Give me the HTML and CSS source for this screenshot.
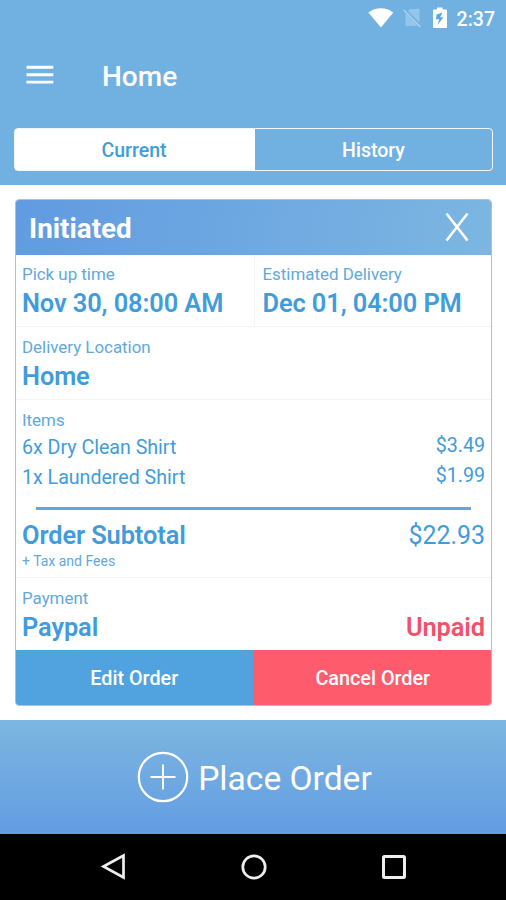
FILE: index.html
```html
<!DOCTYPE html>
<html lang="en">
<head>
<meta charset="utf-8">
<title>Home</title>
<link rel="stylesheet" href="styles.css">
</head>
<body>
<div class="screen">
  <header class="header">
    <div class="status">
      <svg class="wifi" width="26" height="20" viewBox="0 0 26 20"><path d="M.4 4.6C7.5-1.2 18.500-1.200 25.300 4.600L12.900 19.500z" fill="#fff"/></svg>
      <svg class="sim" width="20" height="20" viewBox="0 0 20 20"><path d="M7 1H16.500V14.800L5 3zM2.500 5L15 18H2.500z" fill="#94c6e9"/><path d="M.8 2L17.500 19" stroke="#a8d2ef" stroke-width="1.500"/></svg>
      <svg class="battery" width="16" height="22" viewBox="0 0 16 22"><path d="M5 .5H10.500V2.500H14Q15 2.500 15 3.500V20Q15 21 14 21H2Q1 21 1 20V3.500Q1 2.500 2 2.500H5z" fill="#fff"/><path d="M10.500 5.500L4.500 7.500L4 12.300H7.300L5.500 18L11.500 10.300H8.200z" fill="#57a9df"/></svg>
      <span class="clock">2:37</span>
    </div>
    <div class="appbar">
      <svg class="menu" width="28" height="20" viewBox="0 0 28 20"><path d="M.5 2.300H27.300M.5 9.700H27.300M.5 17.100H27.300" stroke="#fff" stroke-width="2.900"/></svg>
      <h1 class="title">Home</h1>
    </div>
    <nav class="tabs">
      <div class="tab tab-active">Current</div>
      <div class="tab">History</div>
    </nav>
  </header>

  <main class="content">
    <article class="card">
      <div class="card-head">
        <h2 class="state">Initiated</h2>
        <svg class="close" width="24" height="30" viewBox="0 0 24 30"><path d="M1.500 1.500L22.500 28.500M22.500 1.500L1.500 28.500" stroke="#fff" stroke-width="2.600" fill="none"/></svg>
      </div>
      <div class="times">
        <section class="cell">
          <div class="label">Pick up time</div>
          <div class="value">Nov 30, 08:00 AM</div>
        </section>
        <section class="cell cell-right">
          <div class="label">Estimated Delivery</div>
          <div class="value">Dec 01, 04:00 PM</div>
        </section>
      </div>
      <section class="cell location">
        <div class="label">Delivery Location</div>
        <div class="value">Home</div>
      </section>
      <section class="cell items">
        <div class="label">Items</div>
        <div class="item"><span>6x Dry Clean Shirt</span><span class="price">$3.49</span></div>
        <div class="item"><span>1x Laundered Shirt</span><span class="price">$1.99</span></div>
        <div class="rule"></div>
        <div class="subtotal"><span class="value">Order Subtotal</span><span class="amount">$22.93</span></div>
        <div class="note">+ Tax and Fees</div>
      </section>
      <section class="cell payment">
        <div class="label">Payment</div>
        <div class="pay-row"><span class="value">Paypal</span><span class="value unpaid">Unpaid</span></div>
      </section>
      <div class="actions">
        <div class="action edit">Edit Order</div>
        <div class="action cancel">Cancel Order</div>
      </div>
    </article>
  </main>

  <div class="place">
    <svg width="52" height="52" viewBox="0 0 52 52" fill="none" stroke="#fff"><circle cx="26" cy="26" r="24.200" stroke-width="2.200"/><path d="M13.500 26H38.500M26 13.500V38.500" stroke-width="1.900"/></svg>
    <span class="place-text">Place Order</span>
  </div>

  <footer class="navbar">
    <svg width="28" height="30" viewBox="0 0 28 30"><path d="M3.500 14.500L23.500 3.500V25.500z" fill="none" stroke="#eee" stroke-width="2.700"/></svg>
    <svg width="28" height="30" viewBox="0 0 28 30"><circle cx="14" cy="15" r="11.200" fill="none" stroke="#eee" stroke-width="2.700"/></svg>
    <svg width="28" height="30" viewBox="0 0 28 30"><rect x="3.500" y="4.500" width="21" height="21" rx="1" fill="none" stroke="#eee" stroke-width="3"/></svg>
  </footer>
</div>
</body>
</html>
```

FILE: styles.css
```css
* { box-sizing: border-box; }
body { margin: 0; font-family: Roboto, "Liberation Sans", sans-serif; background: #fff; }
svg { display: block; flex: none; }
.screen { width: 506px; height: 900px; display: flex; flex-direction: column; overflow: hidden; }

.header { height: 185px; background: #70b1e2; color: #fff; padding: 0 13px 0 14px; }
.status { height: 38px; display: flex; align-items: flex-start; justify-content: flex-end; padding-top: 8px; margin-right: -2px; }
.sim { margin: 0 0 0 9px; }
.battery { margin: -1px 9px 0 9px; }
.clock { font-size: 19.5px; font-weight: 500; line-height: 24px; }
.appbar { height: 90px; display: flex; align-items: flex-start; padding: 0 0 0 12px; }
.menu { margin-top: 27px; }
.title { margin: 22px 0 0 48px; font-size: 28px; font-weight: 500; line-height: 34px; }
.tabs { height: 43px; display: flex; border: 1.5px solid #f0f8ff; border-radius: 4px; }
.tab { flex: 1; font-size: 19.5px; font-weight: 500; line-height: 43px; text-align: center; }
.tab-active { flex: 0 0 240px; padding-right: 2px; background: #fff; color: #409ddb; }

.content { height: 535px; padding: 14px 14px 0 15px; background: #fff; }
.card { height: 507px; border: 1px solid #b9bec2; border-radius: 4px; overflow: hidden; background: #fff; color: #419cdb; }
.card-head { height: 55px; display: flex; justify-content: space-between; padding: 0 22px 0 13px; background: linear-gradient(100deg, #619be1, #7cb6e1); color: #fff; }
.state { margin: 0; font-size: 27.8px; font-weight: 700; line-height: 57px; }
.close { margin-top: 12px; }
.times { height: 72px; display: flex; border-bottom: 1px solid #f2f5f6; }
.cell { padding: 9px 6px 0; }
.times .cell { width: 238px; }
.times .cell-right { border-left: 1px solid #f2f5f6; padding-left: 8px; }
.label { font-size: 16.9px; line-height: 20px; color: #60a9df; }
.value { font-size: 25.4px; line-height: 30px; font-weight: 600; letter-spacing: -0.1px; }
.cell > .value { margin-top: 4px; }
.location, .items, .payment { padding-top: 10px; }
.location { height: 73px; border-bottom: 1px solid #f2f5f6; }
.items { height: 178px; border-bottom: 1px solid #f2f5f6; }
.item { display: flex; justify-content: space-between; font-size: 19.6px; line-height: 30px; }
.label + .item { margin-top: 3px; }
.price { margin-top: -2px; }
.rule { height: 3px; margin: 14px 14px 10px; background: #5ea8df; }
.subtotal, .pay-row { display: flex; justify-content: space-between; }
.amount { font-size: 24.9px; line-height: 32px; }
.note { margin-top: 1px; font-size: 14px; line-height: 17px; color: #60a9df; }
.pay-row { margin-top: 4px; }
.payment { height: 72px; }
.value.unpaid { color: #f5506a; }
.actions { height: 55px; display: flex; }
.action { flex: 1; color: #fff; font-size: 19.8px; font-weight: 500; line-height: 58px; text-align: center; }
.edit { background: #51a3e0; }
.cancel { background: #fe5c6c; padding-left: 2px; }

.place { height: 114px; display: flex; align-items: center; justify-content: center; gap: 9px; padding-left: 3px; background: linear-gradient(#7cb6e1, #639de2); color: #fff; }
.place-text { font-size: 33.6px; line-height: 40px; padding-top: 3px; }
.navbar { height: 66px; background: #000; display: flex; justify-content: center; align-items: center; gap: 112px; padding-left: 2px; }
```
